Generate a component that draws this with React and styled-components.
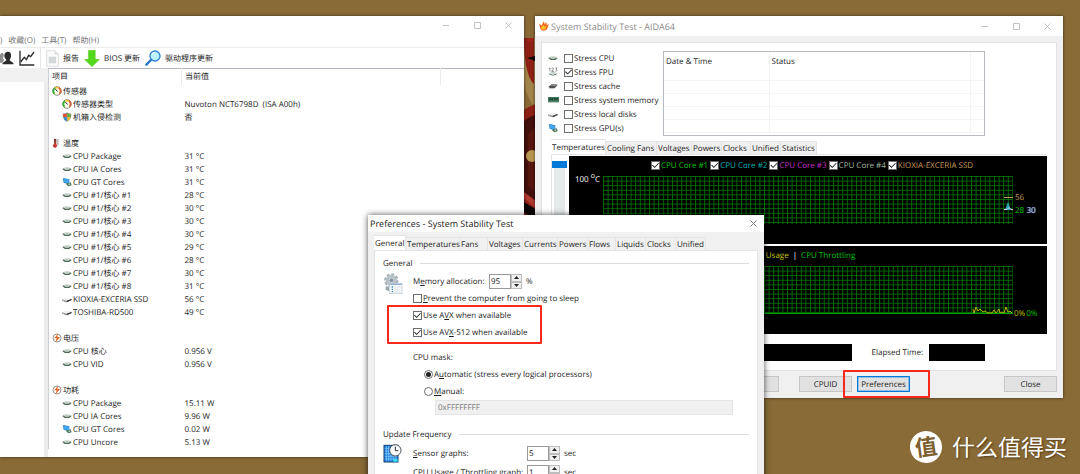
import React from 'react';
import styled, { createGlobalStyle } from 'styled-components';

const GlobalStyle = createGlobalStyle`
  * {
    box-sizing: border-box;
  }
  body {
    margin: 0;
    background: #896b37;
    color: #1c1c1c;
    font-family: 'Open Sans', 'Noto Sans CJK SC', sans-serif;
    font-size: 8px;
    line-height: 13px;
    text-rendering: geometricPrecision;
  }
  button,
  input {
    font: inherit;
    color: inherit;
    margin: 0;
    padding: 0;
    text-rendering: inherit;
  }
`;

const ChipIcon = () => (
  <svg width="10" height="8" viewBox="0 0 30 24">
    <path d="M1 12l8-4h12l8 4-7 6H8z" fill="#4d6b55" />
    <path d="M5 11l5-4h10l5 4-6 3h-8z" fill="#d5ddd7" />
    <path d="M10 11l3-2h5l3 2-3 2h-5z" fill="#bcc7be" />
  </svg>
);

const DiskIcon = () => (
  <svg width="10" height="8" viewBox="0 0 30 24">
    <path d="M1 13l12 4 16-6v4l-15 7L1 17z" fill="#6a6a6a" />
    <path d="M1 12l13-5 15 4-15 6z" fill="#f1f1f1" />
    <path d="M14 17l14-5v4l-13 6z" fill="#3f3f3f" />
    <path d="M2 14l11 4v3L2 17z" fill="#b5b5b5" />
  </svg>
);

const GpuIcon = () => (
  <svg width="10" height="10" viewBox="0 0 30 30">
    <path d="M3 3l19 4v15L5 17z" fill="#1c6fb8" />
    <path d="M4 4l17 4v12L6 16z" fill="#3fa7f3" />
    <path d="M11 20l15-4 3 9-10 3z" fill="#4b7358" />
    <circle cx="22" cy="22" r="3" fill="#a8c3b0" />
  </svg>
);

const GaugeIcon = () => (
  <svg width="10" height="10" viewBox="0 0 30 30">
    <circle cx="15" cy="15" r="13" fill="#fffbe9" stroke="#5c5c50" strokeWidth="2" />
    <path d="M8 23A10 10 0 0 1 10 6" fill="none" stroke="#35b233" strokeWidth="5" />
    <path d="M10 6a10 10 0 0 1 10 0" fill="none" stroke="#f2c12e" strokeWidth="5" />
    <path d="M20 6a10 10 0 0 1 2 17" fill="none" stroke="#e0602c" strokeWidth="5" />
    <path d="M10 10l7 6" stroke="#222" strokeWidth="3" />
  </svg>
);

const ShieldIcon = () => (
  <svg width="10" height="10" viewBox="0 0 30 30">
    <path d="M15 1C11 4 6 5 2 5c0 12 3 20 13 24 10-4 13-12 13-24-4 0-9-1-13-4z" fill="#8f9aa3" />
    <path d="M14 3v12H4c-1-3-1-5-1-8 4 0 8-1 11-4z" fill="#e8502a" />
    <path d="M16 3v12h10c1-3 1-5 1-8-4 0-8-1-11-4z" fill="#63b233" />
    <path d="M5 16h9v12c-5-2-8-6-9-12z" fill="#2f86d8" />
    <path d="M25 16h-9v12c5-2 8-6 9-12z" fill="#f7c325" />
  </svg>
);

const ThermoIcon = () => (
  <svg width="10" height="10" viewBox="0 0 30 30">
    <rect x="6" y="2" width="7" height="20" rx="3" fill="#7c2f2b" />
    <circle cx="9" cy="23" r="6" fill="#c3312a" />
    <path d="M9 8v14" stroke="#e9655c" strokeWidth="2" />
    <path d="M17 3v20M17 5h4M17 11h4M17 17h4" stroke="#9a9a9a" strokeWidth="2" />
  </svg>
);

const BoltIcon = () => (
  <svg width="10" height="10" viewBox="0 0 30 30">
    <circle cx="15" cy="15" r="12" fill="#fff" stroke="#6d5a50" strokeWidth="2" />
    <path d="M18 2L7 16h7l-3 12 13-16h-8z" fill="#e2621b" />
  </svg>
);

const FpuIcon = () => (
  <svg width="10" height="10" viewBox="0 0 30 30">
    <path d="M3 6l3-3v10M11 4c5-3 7 1 4 4l-4 5h7M22 3h5l-3 4c4 1 3 6-2 6" fill="none" stroke="#555" strokeWidth="2" />
    <path d="M2 19c5 9 21 9 26 0l-6 2c-4 3-10 3-14 0z" fill="#4d6b55" />
    <path d="M7 16h16l-3 4H10z" fill="#b6c2b9" />
  </svg>
);

const CacheIcon = () => (
  <svg width="10" height="8" viewBox="0 0 30 24">
    <path d="M1 14l11-8 17 2-8 10-15 1z" fill="#4d4d4d" />
    <path d="M6 11l7-5 14 2-7 5z" fill="#8b8b8b" />
    <path d="M4 17v4M9 18v4M14 18v4M19 17v4" stroke="#aaa" strokeWidth="2" />
  </svg>
);

const RamIcon = () => (
  <svg width="11" height="8" viewBox="0 0 33 24">
    <rect x="0" y="3" width="33" height="16" fill="#3c7a5a" />
    <path d="M3 6h5v7H3zM10 6h5v7h-5zM18 6h5v7h-5zM25 6h5v7h-5z" fill="#24463a" />
    <path d="M1 18h31" stroke="#a9b98b" strokeWidth="2" strokeDasharray="2 2" />
  </svg>
);

const FlameIcon = () => (
  <svg width="10" height="10" viewBox="0 0 30 30">
    <path d="M13 1c3 4 4 7 4 10 2-2 3-5 3-8 4 3 4 7 3 10 2-1 3-3 6-4-1 4-1 7-3 11-2 6-7 9-12 9C7 29 3 25 3 19L0 7c3 2 5 5 7 7 3-4 6-8 6-13z" fill="#f26a1b" />
    <path d="M13 11c1 3 2 5 3 7 2-1 3-3 5-3 1 6-2 11-7 11-5 0-8-3-7-8 3-1 5-4 6-7z" fill="#fdc52c" />
  </svg>
);

const UserIcon = () => (
  <svg width="14" height="15" viewBox="0 0 42 45">
    <path d="M0 12c3-8 10-7 11-1 1 5-1 8-3 11l5 5-6 8H0z" fill="#8f8f8f" />
    <path d="M13 14C13 5 18 2 24 2s10 4 9 12c0 6-3 10-4 13 0 4 12 5 12 13H7c0-8 12-9 12-13-1-3-6-6-6-13z" fill="#2b2b2b" />
  </svg>
);

const GraphIcon = () => (
  <svg width="16" height="16" viewBox="0 0 48 48" fill="none" stroke="#2b2b2b" strokeWidth="4">
    <path d="M3 2v43h43" />
    <path d="M5 36l11-14 6 7 7-13 6 4 10-14" />
  </svg>
);

const PageIcon = () => (
  <svg width="13" height="17" viewBox="0 0 39 51">
    <path d="M2 2h25l10 10v37H2z" fill="#fbfbfb" stroke="#cfcfcf" strokeWidth="2" />
    <path d="M27 2v10h10" fill="#e6e6e6" stroke="#cfcfcf" strokeWidth="2" />
    <rect x="8" y="20" width="22" height="20" fill="#d5d8d8" />
  </svg>
);

const DownIcon = () => (
  <svg width="16" height="17" viewBox="0 0 48 51">
    <path d="M13 1h21v27h13L24 50 1 28h12z" fill="#55d91e" stroke="#43bb16" strokeWidth="1" />
  </svg>
);

const SearchIcon = () => (
  <svg width="16" height="16" viewBox="0 0 48 48">
    <path d="M19 29L4 44" stroke="#2c79c9" strokeWidth="7" strokeLinecap="round" />
    <circle cx="30" cy="18" r="15" fill="#bdf1fd" stroke="#2e83d4" strokeWidth="4" />
    <path d="M20 15a10 10 0 0 1 9-8" fill="none" stroke="#fff" strokeWidth="3" />
  </svg>
);

const GearIcon = () => (
  <svg width="20" height="22" viewBox="0 0 60 66">
    <circle cx="25" cy="22" r="17" fill="none" stroke="#a3afb8" strokeWidth="9" strokeDasharray="8 5" />
    <circle cx="25" cy="22" r="12" fill="none" stroke="#b7c1c8" strokeWidth="10" />
    <circle cx="25" cy="22" r="6" fill="#8594a0" />
    <path d="M8 39l10 4v12l-10-5z" fill="#9ba7af" />
    <rect x="20" y="32" width="37" height="30" fill="#f4f7f9" stroke="#bcc5cb" strokeWidth="2" />
    <path d="M20 34h37" stroke="#8fb4d4" strokeWidth="4" />
    <path d="M26 42h4M26 49h4M26 56h4" stroke="#3d90d8" strokeWidth="4" />
    <path d="M34 42h18M34 49h18M34 56h18" stroke="#d5dce0" strokeWidth="2" />
  </svg>
);

const ClockGridIcon = () => (
  <svg width="19" height="19" viewBox="0 0 57 57">
    <rect x="3" y="4" width="42" height="50" fill="#1b7fe0" stroke="#163d6b" strokeWidth="3" />
    <path d="M10 6v46M17 6v46M24 6v46M31 6v46M38 6v46M5 13h38M5 21h38M5 29h38M5 37h38M5 45h38" stroke="#8fd0ff" strokeWidth="2" />
    <path d="M31 45h13v8H31z" fill="#2fe0f2" />
    <circle cx="37" cy="19" r="17" fill="#f7f9fa" stroke="#4a545c" strokeWidth="3" />
    <path d="M37 8v12h9" fill="none" stroke="#333" strokeWidth="3" />
  </svg>
);

const MinimizeGlyph = () => (
  <svg width="7" height="7" viewBox="0 0 7 7" stroke="currentColor">
    <path d="M0 3.5h6" />
  </svg>
);

const MaximizeGlyph = () => (
  <svg width="7" height="7" viewBox="0 0 7 7" fill="none" stroke="currentColor">
    <path d="M.5.5h6v6h-6z" />
  </svg>
);

const CloseGlyph = () => (
  <svg width="7" height="7" viewBox="0 0 7 7" stroke="currentColor">
    <path d="M.5.5l6 6M6.5.5l-6 6" />
  </svg>
);

const Wallpaper = () => (
  <WallpaperArt width="16" height="190" viewBox="0 0 16 190">
    <path d="M0 0h16v66H8C4 58 0 52 0 40z" fill="#a1854a" />
    <path d="M0 0h10v46C5 42 0 28 0 0z" fill="#8e2016" />
    <path d="M3 0h6v3l-4 1z" fill="#a3251a" />
    <path d="M3 20l8-2v5z" fill="#120808" />
    <path d="M0 72c4-3 8-5 16-6v124H0z" fill="#8e2016" />
    <path d="M0 84c3-4 6-6 16-8v90c-8 0-13-4-16-10z" fill="#43100c" />
    <path d="M4 96l8-8v66l-8-6z" fill="#571510" />
    <circle cx="8" cy="118" r="6" fill="#b8964f" />
    <path d="M0 154l16 12v8L0 160z" fill="#b03a32" />
    <path d="M0 164l16 10v16H0z" fill="#0d0505" />
    <path d="M0 174l16 12v4H0z" fill="#8e2016" />
  </WallpaperArt>
);

const sensors = [
  { icon: GaugeIcon, name: '传感器', group: true },
  { icon: GaugeIcon, name: '传感器类型', value: 'Nuvoton NCT6798D  (ISA A00h)' },
  { icon: ShieldIcon, name: '机箱入侵检测', value: '否' },
  {},
  { icon: ThermoIcon, name: '温度', group: true },
  { icon: ChipIcon, name: 'CPU Package', value: '31 °C' },
  { icon: ChipIcon, name: 'CPU IA Cores', value: '31 °C' },
  { icon: GpuIcon, name: 'CPU GT Cores', value: '31 °C' },
  { icon: ChipIcon, name: 'CPU #1/核心 #1', value: '28 °C' },
  { icon: ChipIcon, name: 'CPU #1/核心 #2', value: '30 °C' },
  { icon: ChipIcon, name: 'CPU #1/核心 #3', value: '30 °C' },
  { icon: ChipIcon, name: 'CPU #1/核心 #4', value: '30 °C' },
  { icon: ChipIcon, name: 'CPU #1/核心 #5', value: '29 °C' },
  { icon: ChipIcon, name: 'CPU #1/核心 #6', value: '28 °C' },
  { icon: ChipIcon, name: 'CPU #1/核心 #7', value: '30 °C' },
  { icon: ChipIcon, name: 'CPU #1/核心 #8', value: '31 °C' },
  { icon: DiskIcon, name: 'KIOXIA-EXCERIA SSD', value: '56 °C' },
  { icon: DiskIcon, name: 'TOSHIBA-RD500', value: '49 °C' },
  {},
  { icon: BoltIcon, name: '电压', group: true },
  { icon: ChipIcon, name: 'CPU 核心', value: '0.956 V' },
  { icon: ChipIcon, name: 'CPU VID', value: '0.956 V' },
  {},
  { icon: BoltIcon, name: '功耗', group: true },
  { icon: ChipIcon, name: 'CPU Package', value: '15.11 W' },
  { icon: ChipIcon, name: 'CPU IA Cores', value: '9.96 W' },
  { icon: GpuIcon, name: 'CPU GT Cores', value: '0.02 W' },
  { icon: ChipIcon, name: 'CPU Uncore', value: '5.13 W' },
];

const stressItems = [
  { icon: ChipIcon, label: 'Stress CPU' },
  { icon: FpuIcon, label: 'Stress FPU', checked: true },
  { icon: CacheIcon, label: 'Stress cache' },
  { icon: RamIcon, label: 'Stress system memory' },
  { icon: DiskIcon, label: 'Stress local disks' },
  { icon: GpuIcon, label: 'Stress GPU(s)' },
];

const stabilityTabs = [
  ['Temperatures', 55],
  ['Cooling Fans', 51],
  ['Voltages', 35],
  ['Powers', 30],
  ['Clocks', 29],
  ['Unified', 30],
  ['Statistics', 36],
];

const preferenceTabs = [
  ['General', 32],
  ['Temperatures', 54],
  ['Fans', 28],
  ['Voltages', 35],
  ['Currents', 35],
  ['Powers', 30],
  ['Flows', 28],
  ['Liquids', 30],
  ['Clocks', 30],
  ['Unified', 30],
];

const temperatureSeries = [
  ['CPU Core #1', '#00c400'],
  ['CPU Core #2', '#00b4b4'],
  ['CPU Core #3', '#c22fc2'],
  ['CPU Core #4', '#a3b8a3'],
  ['KIOXIA-EXCERIA SSD', '#c49a5a'],
];

function WindowControls() {
  return (
    <Controls>
      <ControlButton aria-label="Minimize">
        <MinimizeGlyph />
      </ControlButton>
      <ControlButton aria-label="Maximize">
        <MaximizeGlyph />
      </ControlButton>
      <ControlButton aria-label="Close window">
        <CloseGlyph />
      </ControlButton>
    </Controls>
  );
}

function Tabs({ items }) {
  return (
    <TabList role="tablist">
      {items.map(([label, width], i) => (
        <Tab key={label} role="tab" aria-selected={i === 0} $width={width} $active={i === 0}>
          {label}
        </Tab>
      ))}
    </TabList>
  );
}

function Grid({ id, children }) {
  return (
    <Plot>
      <defs>
        <pattern id={id} width="4.6" height="4.6" patternUnits="userSpaceOnUse">
          <path d="M0 .5h4.6M.5 0v4.6" stroke="#006a00" strokeWidth="1" />
        </pattern>
      </defs>
      <rect width="100%" height="48" fill={`url(#${id})`} />
      <svg x="100%" overflow="visible">
        {children}
      </svg>
    </Plot>
  );
}

function Spinner({ label, value }) {
  return (
    <SpinBox>
      <input aria-label={label} defaultValue={value} />
      <SpinButtons>
        <button aria-label={`${label} up`}>
          <svg width="5" height="3" viewBox="0 0 5 3">
            <path d="M0 3L2.5 0 5 3z" fill="#222" />
          </svg>
        </button>
        <button aria-label={`${label} down`}>
          <svg width="5" height="3" viewBox="0 0 5 3">
            <path d="M0 0l2.500 3L5 0z" fill="#222" />
          </svg>
        </button>
      </SpinButtons>
    </SpinBox>
  );
}

function SensorWindow() {
  return (
    <SensorFrame>
      <SensorTitle>
        <WindowControls />
      </SensorTitle>
      <MenuBar>
        <span>)</span>
        <span>收藏(O)</span>
        <span>工具(T)</span>
        <span>帮助(H)</span>
      </MenuBar>
      <Toolbar>
        <ToolButton aria-label="Users">
          <UserIcon />
        </ToolButton>
        <ToolButton aria-label="Graph">
          <GraphIcon />
        </ToolButton>
        <ToolDivider />
        <ToolButton>
          <PageIcon />
          报告
        </ToolButton>
        <ToolButton>
          <DownIcon />
          BIOS 更新
        </ToolButton>
        <ToolButton>
          <SearchIcon />
          驱动程序更新
        </ToolButton>
      </Toolbar>
      <SensorBody>
        <TreePane />
        <SensorTable>
          <colgroup>
            <col style={{ width: 133 }} />
            <col style={{ width: 259 }} />
            <col />
          </colgroup>
          <thead>
            <tr>
              <th>项目</th>
              <th>当前值</th>
              <th />
            </tr>
          </thead>
          <tbody>
            {sensors.map(({ icon: Icon, name, value, group }, i) => (
              <tr key={i}>
                <td>
                  {name && (
                    <SensorName $group={group}>
                      <Icon />
                      {name}
                    </SensorName>
                  )}
                </td>
                <td>{value}</td>
                <td />
              </tr>
            ))}
          </tbody>
        </SensorTable>
      </SensorBody>
    </SensorFrame>
  );
}

function StabilityWindow() {
  return (
    <StabilityFrame>
      <StabilityTitle>
        <FlameIcon />
        System Stability Test - AIDA64
        <WindowControls />
      </StabilityTitle>
      <StabilityPanel>
        <StressRow>
          <StressList>
            {stressItems.map(({ icon: Icon, label, checked }) => (
              <StressItem key={label}>
                <IconCell>
                  <Icon />
                </IconCell>
                <Check type="checkbox" defaultChecked={checked} />
                {label}
              </StressItem>
            ))}
          </StressList>
          <LogBox>
            <LogTable>
              <colgroup>
                <col style={{ width: 105 }} />
                <col />
                <col style={{ width: 14 }} />
              </colgroup>
              <thead>
                <tr>
                  <th>Date &amp; Time</th>
                  <th>Status</th>
                  <th />
                </tr>
              </thead>
              <tbody>
                {[1, 2, 3, 4].map((row) => (
                  <tr key={row}>
                    <td />
                    <td />
                    <td />
                  </tr>
                ))}
              </tbody>
            </LogTable>
          </LogBox>
        </StressRow>
        <StabilityTabs>
          <Tabs items={stabilityTabs} />
          <TabBody>
            <ScaleSlider type="range" aria-label="Scale" min="0" max="100" defaultValue="0" />
            <Charts>
              <Chart>
                <Legend $start={82} $gap={2}>
                  {temperatureSeries.map(([label, color]) => (
                    <LegendItem key={label} $color={color}>
                      <Check type="checkbox" defaultChecked />
                      {label}
                    </LegendItem>
                  ))}
                </Legend>
                <PlotRow>
                  <AxisLabel>
                    100 <sup>o</sup>C
                  </AxisLabel>
                  <Grid id="temperature-grid">
                    <path d="M-9 21.500H0" stroke="#c49a5a" />
                    <path d="M-8 34l3-8 3 8z" fill="#2aa7b4" />
                    <path d="M-9 33.500h3l2-2 2 2h2" fill="none" stroke="#d9c8e8" />
                  </Grid>
                  <Readings>
                    <Reading $color="#c49a5a">56</Reading>
                    <Reading $color="#00c400">
                      28 <Overlap>30</Overlap>
                    </Reading>
                  </Readings>
                </PlotRow>
              </Chart>
              <Chart>
                <Legend $start={179} $gap={4}>
                  <UsageTitle $color="#c4c400">CPU Usage</UsageTitle>
                  <UsageTitle $color="#ffffff">|</UsageTitle>
                  <UsageTitle $color="#00c400">CPU Throttling</UsageTitle>
                </Legend>
                <PlotRow>
                  <AxisLabel />
                  <Grid id="usage-grid">
                    <path d="M-410 47.500H0" stroke="#00a000" />
                    <path
                      d="M-40 43l1 4 2-6 2 4 2-2 3 3 2-1 3 2h4l2-3 2 3 3-4 1 4 2-1 2 1 2-6 2 5 2-1 2 2"
                      fill="none"
                      stroke="#b4b400"
                    />
                  </Grid>
                  <UsageReadings>
                    <Reading $color="#c4c400">0%</Reading>
                    <Reading $color="#00c400">0%</Reading>
                  </UsageReadings>
                </PlotRow>
              </Chart>
            </Charts>
          </TabBody>
        </StabilityTabs>
        <StatusRow>
          <BlackBox $width={123} />
          <span>Elapsed Time:</span>
          <BlackBox $width={56} />
        </StatusRow>
      </StabilityPanel>
      <ButtonRow>
        <ButtonGroup>
          <PushButton>Save</PushButton>
          <ToolPair>
            <PushButton>CPUID</PushButton>
            <ButtonMark>
              <PushButton $focused>Preferences</PushButton>
            </ButtonMark>
          </ToolPair>
        </ButtonGroup>
        <PushButton>Close</PushButton>
      </ButtonRow>
    </StabilityFrame>
  );
}

function PreferencesWindow() {
  return (
    <PreferencesFrame>
      <PreferencesTitle>
        Preferences - System Stability Test
        <ControlButton aria-label="Close preferences">
          <CloseGlyph />
        </ControlButton>
      </PreferencesTitle>
      <Tabs items={preferenceTabs} />
      <PreferencesPanel>
        <GroupTitle>General</GroupTitle>
        <GroupBody>
          <GearIcon />
          <div>
            <Row>
              <MemoryLabel>
                M<u>e</u>mory allocation:
              </MemoryLabel>
              <Spinner label="Memory allocation" value="95" />
              <Unit>%</Unit>
            </Row>
            <Option>
              <Check type="checkbox" />
              <span>
                <u>P</u>revent the computer from going to sleep
              </span>
            </Option>
            <OptionMark>
              <Option>
                <Check type="checkbox" defaultChecked />
                <span>
                  Use A<u>V</u>X when available
                </span>
              </Option>
              <Option>
                <Check type="checkbox" defaultChecked />
                <span>
                  Use AV<u>X</u>-512 when available
                </span>
              </Option>
            </OptionMark>
            <MaskTitle>CPU mask:</MaskTitle>
            <MaskOptions>
              <Option>
                <Radio type="radio" name="mask" defaultChecked />
                <span>
                  A<u>u</u>tomatic (stress every logical processors)
                </span>
              </Option>
              <Option>
                <Radio type="radio" name="mask" />
                <span>
                  <u>M</u>anual:
                </span>
              </Option>
              <MaskInput aria-label="CPU mask value" defaultValue="0xFFFFFFFF" disabled />
            </MaskOptions>
          </div>
        </GroupBody>
        <GroupTitle>Update Frequency</GroupTitle>
        <GroupBody>
          <ClockGridIcon />
          <div>
            <FrequencyRow>
              <FrequencyLabel>
                <u>S</u>ensor graphs:
              </FrequencyLabel>
              <Spinner label="Sensor graphs" value="5" />
              <Unit>sec</Unit>
            </FrequencyRow>
            <FrequencyRow>
              <FrequencyLabel>
                CPU <u>U</u>sage / Throttling graph:
              </FrequencyLabel>
              <Spinner label="CPU usage graph" value="1" />
              <Unit>sec</Unit>
            </FrequencyRow>
          </div>
        </GroupBody>
      </PreferencesPanel>
    </PreferencesFrame>
  );
}

function App() {
  return (
    <Desktop>
      <GlobalStyle />
      <Wallpaper />
      <SensorWindow />
      <StabilityWindow />
      <PreferencesWindow />
      <Brand>
        <BrandMark>值</BrandMark>
        什么值得买
      </Brand>
    </Desktop>
  );
}

const Desktop = styled.main`
  position: relative;
  height: 100vh;
  overflow: hidden;
  background: #896b37;
`;

const WallpaperArt = styled.svg`
  position: absolute;
  left: 524px;
  top: 38px;
`;

const Frame = styled.section`
  position: absolute;
  background: #f0f0f0;
  box-shadow: 0 0 3px rgba(0, 0, 0, 0.6);
`;

const SensorFrame = styled(Frame)`
  left: 0;
  right: 556px;
  top: 16px;
  background: #ffffff;
`;

const StabilityFrame = styled(Frame)`
  left: 535px;
  right: 17px;
  top: 16px;
`;

const PreferencesFrame = styled(Frame)`
  left: 368px;
  width: 396px;
  top: 215px;
  padding: 0 6px 20px;
  box-shadow: 0 0 6px rgba(0, 0, 0, 0.7);
`;

const Controls = styled.div`
  display: flex;
  gap: 24px;
  margin-left: auto;
`;

const ControlButton = styled.button`
  display: flex;
  border: 0;
  background: none;
  color: #c2c2c2;
`;

const SensorTitle = styled.header`
  display: flex;
  align-items: center;
  height: 18px;
  padding-right: 12px;
`;

const MenuBar = styled.nav`
  display: flex;
  align-items: center;
  gap: 6px;
  height: 14px;
  color: #777777;
  border-bottom: 1px solid #ececec;
`;

const Toolbar = styled.div`
  display: flex;
  align-items: center;
  gap: 5px;
  height: 20px;
`;

const ToolButton = styled.button`
  display: flex;
  align-items: center;
  gap: 4px;
  border: 0;
  background: none;
`;

const ToolDivider = styled.span`
  width: 1px;
  height: 20px;
  background: #e8e8e8;
`;

const SensorBody = styled.div`
  display: flex;
  padding-bottom: 8px;
  background: linear-gradient(90deg, #ffffff 44px, #ececee 44px, #ececee 48px, #ffffff 48px);
`;

const TreePane = styled.div`
  width: 48px;
  border-top: 14px solid #f0f0f0;
`;

const SensorTable = styled.table`
  flex: 1;
  table-layout: fixed;
  border-collapse: collapse;
  border-top: 1px solid #b4b6bf;
  border-left: 1px solid #cfd0d6;
  white-space: pre;
  th,
  td {
    height: 13px;
    padding: 0 0 0 3px;
    text-align: left;
    font-weight: 400;
  }
  th {
    height: 16px;
    border-right: 1px solid #ebebeb;
    &:last-child {
      border-right: 0;
    }
  }
`;

const SensorName = styled.span`
  display: flex;
  align-items: center;
  gap: 1px;
  height: 13px;
  padding-left: ${(props) => (props.$group ? 0 : 10)}px;
`;

const StabilityTitle = styled.header`
  display: flex;
  align-items: center;
  gap: 2px;
  height: 20px;
  padding: 0 12px 0 4px;
  background: #ffffff;
  color: #8c8c8c;
  font-size: 9px;
`;

const StabilityPanel = styled.div`
  margin: 6px 6px 5px;
  padding: 8px 0 9px;
  background: #ffffff;
  border: 1px solid #e2e2e2;
`;

const StressRow = styled.div`
  display: flex;
  padding: 0 71px 0 6px;
`;

const StressList = styled.div`
  width: 115px;
`;

const StressItem = styled.label`
  display: flex;
  align-items: center;
  height: 14px;
  gap: 1px;
`;

const IconCell = styled.span`
  display: flex;
  width: 15px;
`;

const Check = styled.input`
  appearance: none;
  flex: none;
  display: flex;
  align-items: center;
  justify-content: center;
  width: 9px;
  height: 9px;
  background: #ffffff;
  border: 1px solid #6e6e6e;
  &:checked::before {
    content: '';
    width: 7px;
    height: 7px;
    background: #222222;
    clip-path: polygon(0 50%, 10% 40%, 38% 68%, 90% 14%, 100% 22%, 38% 86%);
  }
`;

const Radio = styled(Check)`
  border-radius: 50%;
  &:checked::before {
    width: 5px;
    height: 5px;
    border-radius: 50%;
    clip-path: none;
  }
`;

const LogBox = styled.div`
  flex: 1;
  height: 85px;
  border: 1px solid #b9bbc2;
`;

const LogTable = styled.table`
  width: 100%;
  table-layout: fixed;
  border-collapse: collapse;
  th,
  td {
    height: 13px;
    padding: 0 2px;
    text-align: left;
    font-weight: 400;
    border-right: 1px solid #f3f3f3;
    border-bottom: 1px solid #f5f5f5;
    &:last-child {
      border-right: 0;
    }
  }
  th {
    height: 28px;
    padding-top: 3px;
    vertical-align: top;
  }
`;

const StabilityTabs = styled.div`
  margin: 3px 9px 0 9px;
`;

const TabList = styled.div`
  display: flex;
  align-items: flex-end;
  height: 15px;
`;

const Tab = styled.button`
  flex: none;
  width: ${(props) => props.$width}px;
  height: ${(props) => (props.$active ? 15 : 13)}px;
  border: 1px solid #e4e4e4;
  border-width: 1px 1px 0 0;
  background: ${(props) => (props.$active ? '#ffffff' : '#f0f0f0')};
  text-align: left;
  padding: 1px 0 0 1px;
  line-height: 12px;
  white-space: nowrap;
`;

const TabBody = styled.div`
  display: flex;
  gap: 2px;
  padding-top: 1px;
  border-top: 1px solid #e4e4e4;
  border-left: 1px solid #e4e4e4;
`;

const ScaleSlider = styled.input`
  appearance: none;
  writing-mode: vertical-lr;
  width: 15px;
  margin-top: 5px;
  background: linear-gradient(#e5e9ea, #e5e9ea) center / 11px 100% no-repeat;
  &::-webkit-slider-thumb {
    appearance: none;
    width: 15px;
    height: 7px;
    background: #0078d7;
  }
`;

const Charts = styled.div`
  flex: 1;
  display: grid;
  gap: 2px;
`;

const Chart = styled.div`
  height: 88px;
  padding-top: 3px;
  background: #000000;
`;

const Legend = styled.div`
  display: flex;
  gap: ${(props) => props.$gap}px;
  height: 13px;
  padding-left: ${(props) => props.$start}px;
`;

const LegendItem = styled.label`
  display: flex;
  align-items: center;
  gap: 1px;
  color: ${(props) => props.$color};
  white-space: nowrap;
`;

const PlotRow = styled.div`
  display: flex;
  padding-top: 4px;
`;

const AxisLabel = styled.div`
  width: 34px;
  padding-right: 3px;
  text-align: right;
  color: #ffffff;
  line-height: 8px;
  white-space: nowrap;
  sup {
    font-size: 7px;
    line-height: 0;
  }
`;

const Plot = styled.svg`
  flex: 1;
  min-width: 0;
  height: 49px;
  overflow: visible;
`;

const Readings = styled.div`
  width: 34px;
  padding: 15px 0 0 2px;
`;

const UsageReadings = styled.div`
  display: flex;
  gap: 1px;
  width: 34px;
  padding: 41px 0 0 1px;
`;

const Reading = styled.div`
  color: ${(props) => props.$color};
`;

const UsageTitle = styled.span`
  color: ${(props) => props.$color};
`;

const Overlap = styled.span`
  color: #d9c8f0;
  text-shadow: 1px 0 #3f8fc8;
`;

const StatusRow = styled.div`
  display: flex;
  align-items: center;
  justify-content: flex-end;
  margin: 10px 71px 0 0;
  span {
    margin: 0 6px 0 19px;
  }
`;

const BlackBox = styled.div`
  width: ${(props) => props.$width}px;
  height: 17px;
  background: #000000;
`;

const ButtonRow = styled.footer`
  display: flex;
  justify-content: space-between;
  padding: 0 6px 6px 191px;
`;

const ButtonGroup = styled.div`
  display: flex;
  gap: 20px;
`;

const ToolPair = styled.div`
  display: flex;
  gap: 5px;
`;

const PushButton = styled.button`
  display: block;
  width: 53px;
  height: 16px;
  background: #e1e1e1;
  border: 1px solid #c6c6c6;
  ${(props) => props.$focused && 'border-color: #0078d7; box-shadow: inset 0 0 0 1px #8cc0ea;'}
`;

const Marked = styled.div`
  position: relative;
  &::after {
    content: '';
    position: absolute;
    border: 2px solid #f8281c;
    border-radius: 1px;
    pointer-events: none;
  }
`;

const ButtonMark = styled(Marked)`
  &::after {
    inset: -6px -20px -6px -14px;
  }
`;

const OptionMark = styled(Marked)`
  width: 100px;
  white-space: nowrap;
  &::after {
    inset: -2px -29px -3px -26px;
  }
`;

const PreferencesTitle = styled.header`
  display: flex;
  align-items: center;
  justify-content: space-between;
  height: 17px;
  margin: 0 -6px 3px;
  padding: 0 7px 0 2px;
  background: #ffffff;
  font-size: 9px;
  button {
    color: #777777;
  }
`;

const PreferencesPanel = styled.div`
  padding: 6px 8px 20px;
  background: #ffffff;
  border: 1px solid #e4e4e4;
`;

const GroupTitle = styled.h2`
  display: flex;
  align-items: center;
  gap: 8px;
  margin: 0;
  font-size: inherit;
  font-weight: 400;
  &::after {
    content: '';
    flex: 1;
    height: 1px;
    background: #dcdcdc;
  }
`;

const GroupBody = styled.div`
  display: grid;
  grid-template-columns: 30px 1fr;
  padding-top: 3px;
  margin-bottom: 13px;
`;

const Row = styled.div`
  display: flex;
  align-items: center;
  height: 17px;
`;

const FrequencyRow = styled(Row)`
  height: 19px;
`;

const MemoryLabel = styled.span`
  width: 76px;
`;

const FrequencyLabel = styled.span`
  width: 114px;
`;

const Unit = styled.span`
  margin-left: 4px;
`;

const SpinBox = styled.div`
  display: flex;
  width: 33px;
  height: 15px;
  input {
    flex: 1;
    min-width: 0;
    border: 1px solid #9a9a9a;
    padding-left: 1px;
  }
`;

const SpinButtons = styled.div`
  display: grid;
  width: 11px;
  button {
    display: flex;
    align-items: center;
    justify-content: center;
    border: 1px solid #bdbdbd;
    background: #f0f0f0;
  }
`;

const Option = styled.label`
  display: flex;
  align-items: center;
  gap: 1px;
  height: 17px;
`;

const MaskTitle = styled(Row)`
  margin-top: 8px;
`;

const MaskOptions = styled.div`
  padding-left: 11px;
`;

const MaskInput = styled.input`
  display: block;
  width: calc(100% - 27px);
  height: 15px;
  margin-left: 11px;
  padding-left: 2px;
  border: 1px solid #e6e6e6;
  background: #f0f0f0;
  color: #7a7a7a;
`;

const Brand = styled.div`
  position: absolute;
  right: 13px;
  bottom: 9px;
  display: flex;
  align-items: center;
  gap: 10px;
  color: #ffffff;
  font-size: 23px;
  line-height: 36px;
  text-shadow: 1px 1px 2px rgba(60, 40, 10, 0.7);
`;

const BrandMark = styled.span`
  width: 32px;
  height: 32px;
  border-radius: 50%;
  background: #ffffff;
  color: #7d6030;
  font-weight: 700;
  font-size: 22px;
  line-height: 32px;
  text-align: center;
  text-shadow: none;
  transform: rotate(-8deg);
`;

export default App;
